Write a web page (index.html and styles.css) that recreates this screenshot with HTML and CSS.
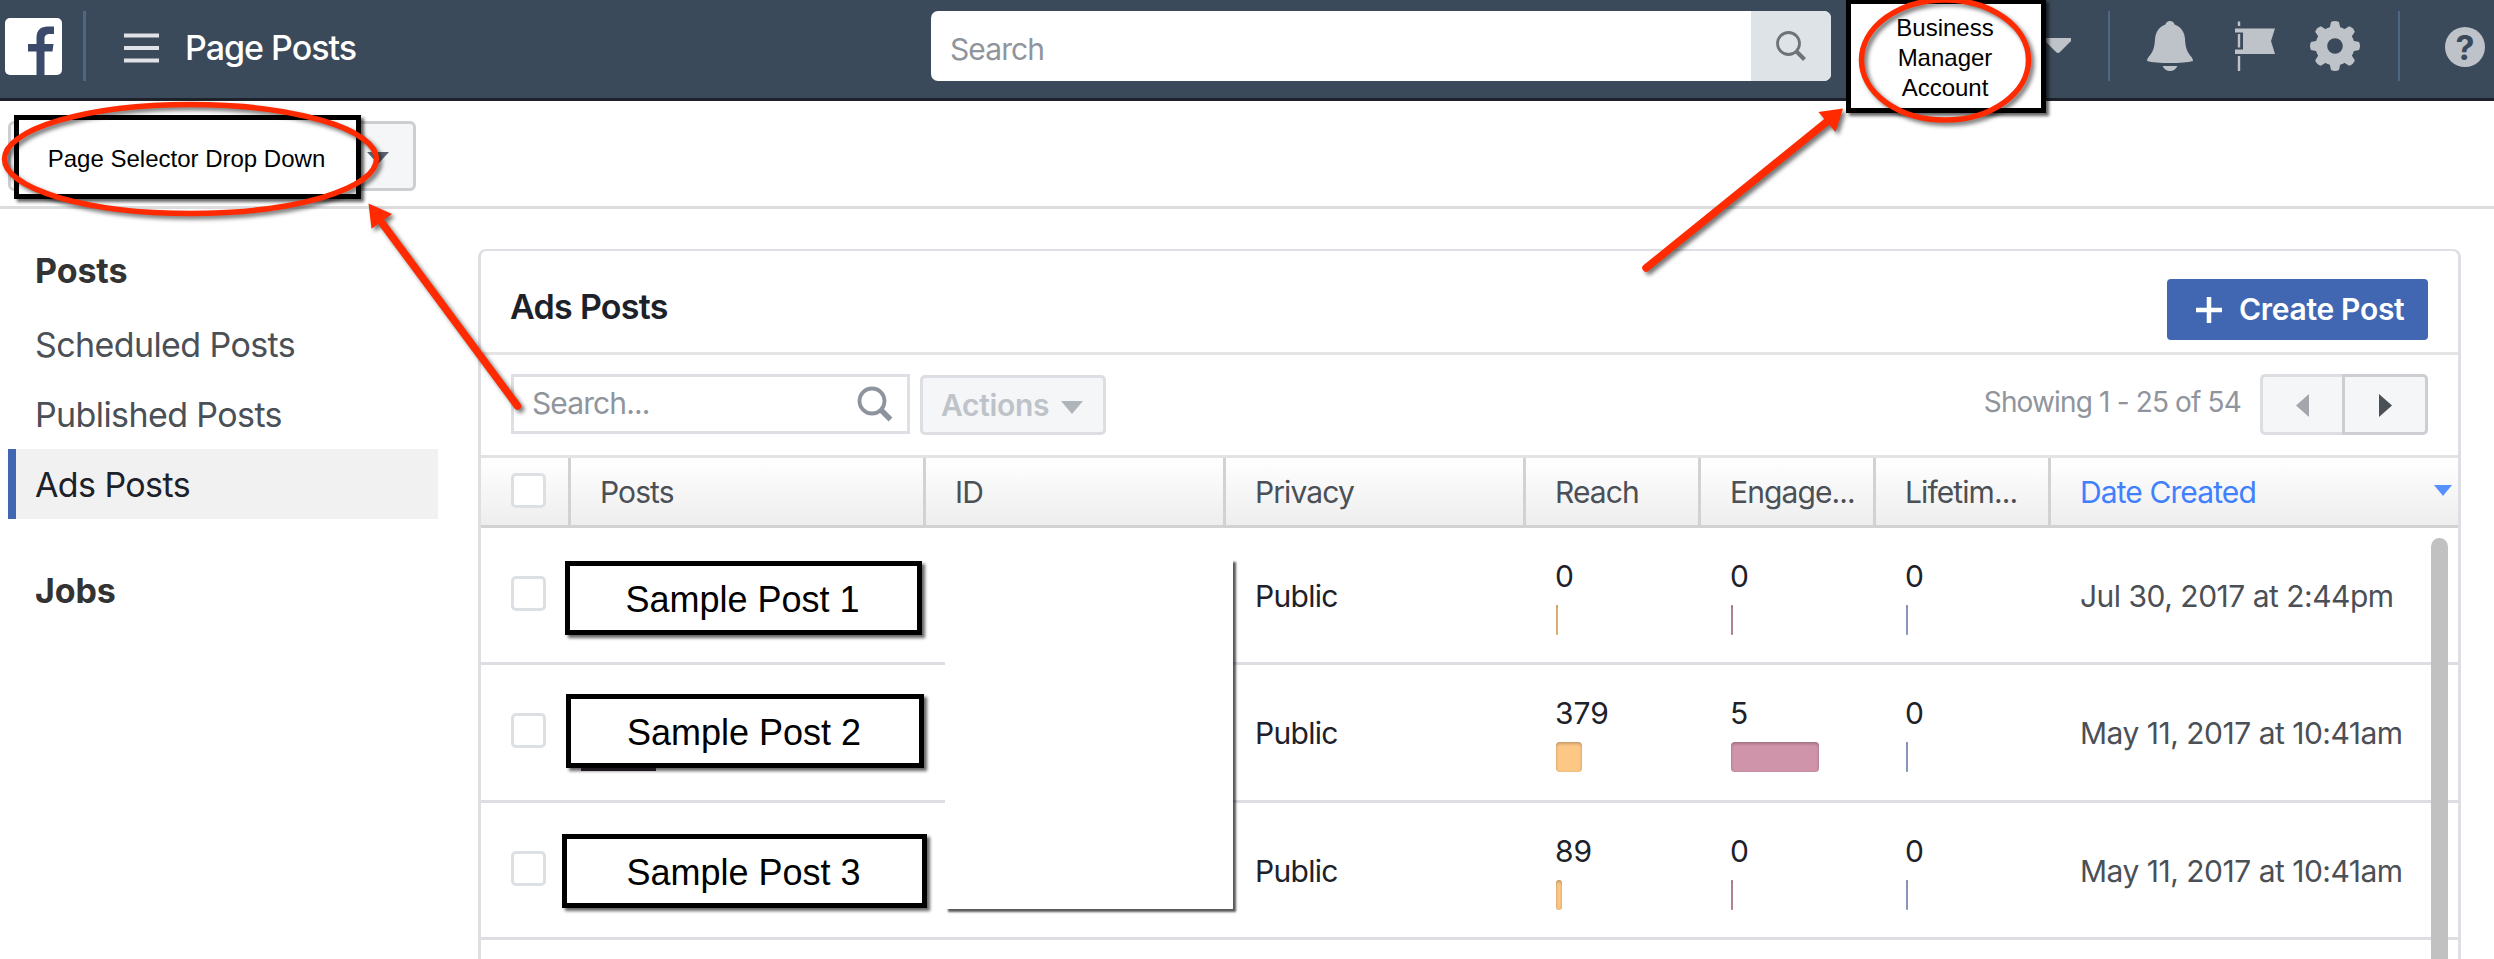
FILE: index.html
```html
<!DOCTYPE html>
<html lang="en">
  <head>
    <meta charset="UTF-8" />
    <title>Page Posts</title>
    <link rel="stylesheet" href="styles.css">
  </head>
  <body>
    <header class="topbar">
      <svg class="logo" width="57" height="57" viewBox="0 0 57 57">
        <rect width="57" height="57" rx="5" fill="#fff" />
        <path d="M31.500 57V33.500H23V26H31.500V20C31.500 12 36 8.500 42.500 8.500H49V16H45C41 16 39.500 17.500 39.500 21V26H48.500L47.500 33.500H39.500V57Z" fill="#3b4a6b" />
      </svg>
      <span class="divider divider-left"></span>
      <svg class="menu" width="35" height="30" viewBox="0 0 35 30">
        <path d="M0 2.500H35M0 15H35M0 27.500H35" stroke="#dfe2e6" stroke-width="4" />
      </svg>
      <div class="topbar-title">Page Posts</div>
      <div class="global-search">
        <div class="global-search-text">Search</div>
        <div class="global-search-button">
          <svg width="30" height="30" viewBox="0 0 30 30" fill="none" stroke="#6f7277">
            <circle cx="12.500" cy="12.500" r="11" stroke-width="2.800" />
            <path d="M20.500 20.500L28.500 28.500" stroke-width="4" />
          </svg>
        </div>
      </div>
      <svg class="account-caret" width="26" height="15" viewBox="0 0 26 15">
        <path d="M0 0H26V3L15 14Q13 16 11 14L0 3Z" fill="#bec3c9" />
      </svg>
      <span class="divider divider-account"></span>
      <svg class="icon-bell" width="46" height="50" viewBox="0 0 46 50" fill="#bec3c9">
        <path d="M23 0C20.500 0 19 1.500 18.500 3.500C12 6 8.500 11 8 18C7.500 27 6 31 1.500 36Q0 38 0 40Q8 42 23 42Q38 42 46 40Q46 38 44.500 36C40 31 38.500 27 38 18C37.500 11 34 6 27.500 3.500C27 1.500 25.500 0 23 0Z" />
        <path d="M15.500 45H30.500Q28 50 23 50Q18 50 15.500 45Z" />
      </svg>
      <svg class="icon-flag" width="40" height="50" viewBox="0 0 40 50" fill="#bec3c9">
        <path d="M0 7.500H40L36 20L40 33H0V28.500H8V11.500H0Z" />
        <path d="M2.800 0.500H5.200V5H2.800ZM2.800 13H5.200V26.500H2.800ZM2.800 35H5.200V50H2.800Z" />
      </svg>
      <svg class="icon-gear" width="50" height="50" viewBox="-25 -25 50 50" fill="#bec3c9">
        <path d="M-5.500 -17L-4 -24Q0 -26 4 -24L5.500 -17V17L4 24Q0 26 -4 24L-5.500 17Z" />
        <path transform="rotate(45)" d="M-5.500 -17L-4 -24Q0 -26 4 -24L5.500 -17V17L4 24Q0 26 -4 24L-5.500 17Z" />
        <path transform="rotate(90)" d="M-5.500 -17L-4 -24Q0 -26 4 -24L5.500 -17V17L4 24Q0 26 -4 24L-5.500 17Z" />
        <path transform="rotate(135)" d="M-5.500 -17L-4 -24Q0 -26 4 -24L5.500 -17V17L4 24Q0 26 -4 24L-5.500 17Z" />
        <circle r="19.500" />
        <circle r="7.800" fill="#3b4a5a" />
      </svg>
      <span class="divider divider-help"></span>
      <div class="icon-help">?</div>
    </header>

    <div class="page-bar">
      <div class="page-select">
        <svg width="22" height="12" viewBox="0 0 22 12"><path d="M0 0H22L11 12Z" fill="#5b6470" /></svg>
      </div>
    </div>

    <div class="content">
      <nav class="sidebar">
        <div class="nav-heading">Posts</div>
        <div class="nav-item nav-first">Scheduled Posts</div>
        <div class="nav-item">Published Posts</div>
        <div class="nav-item nav-active">Ads Posts</div>
        <div class="nav-heading nav-jobs">Jobs</div>
      </nav>

      <main class="panel">
        <div class="panel-head">
          <div class="panel-title">Ads Posts</div>
          <div class="create-button">
            <svg width="28" height="28" viewBox="0 0 28 28"><path d="M14 1V27M1 14H27" stroke="#fff" stroke-width="4.500" /></svg>
            <span>Create Post</span>
          </div>
        </div>

        <div class="toolbar">
          <div class="post-search">
            <span>Search...</span>
            <svg width="36" height="36" viewBox="0 0 36 36" fill="none" stroke="#8d949e">
              <circle cx="15" cy="15" r="12.500" stroke-width="3.800" />
              <path d="M24 24L33.500 33.500" stroke-width="5.500" />
            </svg>
          </div>
          <div class="actions-button">
            <span>Actions</span>
            <svg width="22" height="13" viewBox="0 0 22 13"><path d="M0 0H22L11 13Z" fill="#b0b5bb" /></svg>
          </div>
          <div class="showing">Showing 1 - 25 of 54</div>
          <div class="pager pager-prev">
            <svg width="13" height="23" viewBox="0 0 13 23"><path d="M13 0V23L0 11.500Z" fill="#a3a6aa" /></svg>
          </div>
          <div class="pager pager-next">
            <svg width="13" height="23" viewBox="0 0 13 23"><path d="M0 0V23L13 11.500Z" fill="#4b4f56" /></svg>
          </div>
        </div>

        <div class="grid-row grid-head">
          <div class="check-cell"><span class="checkbox"></span></div>
          <div class="head-cell">Posts</div>
          <div class="head-cell">ID</div>
          <div class="head-cell">Privacy</div>
          <div class="head-cell">Reach</div>
          <div class="head-cell">Engage...</div>
          <div class="head-cell">Lifetim...</div>
          <div class="head-cell sorted">
            <span>Date Created</span>
            <svg width="18" height="11" viewBox="0 0 18 11"><path d="M0 0H18L9 11Z" fill="#5890ff" /></svg>
          </div>
        </div>

        <div class="grid-body">
          <div class="grid-row post-row">
            <div class="check-cell"><span class="checkbox"></span></div>
            <div></div>
            <div></div>
            <div class="text-cell">Public</div>
            <div class="stat-cell">0<span class="bar reach" style="width: 2px"></span></div>
            <div class="stat-cell">0<span class="bar engagement" style="width: 2px"></span></div>
            <div class="stat-cell">0<span class="bar lifetime" style="width: 2px"></span></div>
            <div class="text-cell date">Jul 30, 2017 at 2:44pm</div>
          </div>
          <div class="grid-row post-row">
            <div class="check-cell"><span class="checkbox"></span></div>
            <div></div>
            <div></div>
            <div class="text-cell">Public</div>
            <div class="stat-cell">379<span class="bar reach" style="width: 26px"></span></div>
            <div class="stat-cell">5<span class="bar engagement" style="width: 88px"></span></div>
            <div class="stat-cell">0<span class="bar lifetime" style="width: 2px"></span></div>
            <div class="text-cell date">May 11, 2017 at 10:41am</div>
          </div>
          <div class="grid-row post-row">
            <div class="check-cell"><span class="checkbox"></span></div>
            <div></div>
            <div></div>
            <div class="text-cell">Public</div>
            <div class="stat-cell">89<span class="bar reach" style="width: 6px"></span></div>
            <div class="stat-cell">0<span class="bar engagement" style="width: 2px"></span></div>
            <div class="stat-cell">0<span class="bar lifetime" style="width: 2px"></span></div>
            <div class="text-cell date">May 11, 2017 at 10:41am</div>
          </div>
          <div class="scroll-thumb"></div>
        </div>
      </main>
    </div>

    <!-- callouts drawn over the page -->
    <div class="cover"></div>
    <div class="callout callout-page">Page Selector Drop Down</div>
    <div class="callout callout-account">Business<br />Manager<br />Account</div>
    <div class="callout sample sample-1">Sample Post 1</div>
    <div class="callout sample sample-2">Sample Post 2</div>
    <div class="thumb-edge"></div>
    <div class="callout sample sample-3">Sample Post 3</div>
    <svg class="marks" width="2494" height="959" viewBox="0 0 2494 959" fill="none" stroke="#ff2a00">
      <ellipse cx="190.500" cy="159" rx="186" ry="54.500" stroke-width="5.500" />
      <ellipse cx="1945" cy="60" rx="83.500" ry="60" stroke-width="5.500" />
      <path d="M382 223L517.500 406" stroke-width="7.500" stroke-linecap="round" />
      <path d="M368.500 203.500L392 214L371.500 228.700Z" fill="#ff2a00" stroke="none" />
      <path d="M1829 120L1646 268" stroke-width="7.500" stroke-linecap="round" />
      <path d="M1843 108.500L1818.400 112L1835.500 132Z" fill="#ff2a00" stroke="none" />
    </svg>
  </body>
</html>
```

FILE: styles.css
```css
* {
  box-sizing: border-box;
}
body {
  margin: 0;
  height: 959px;
  overflow: hidden;
  position: relative;
  background: #fff;
  color: #1d2129;
  font-family: Inter, "Liberation Sans", sans-serif;
  font-size: 30px;
}
svg {
  display: block;
  flex: none;
}

/* top bar */
.topbar {
  display: flex;
  align-items: flex-start;
  height: 101px;
  padding: 11px 0 0 5px;
  background: #3b4a5a;
  border-bottom: 3px solid #1d2129;
}
.topbar > * {
  flex: none;
}
.logo {
  margin-top: 7px;
}
.divider {
  width: 2px;
  height: 70px;
  background: #4e6785;
}
.divider-left {
  width: 3px;
  margin-left: 21px;
}
.menu {
  margin: 22px 0 0 38px;
}
.topbar-title {
  width: 746px;
  margin-left: 26px;
  color: #fff;
  font-size: 34px;
  font-weight: 500;
  line-height: 73px;
  letter-spacing: -1px;
}
.global-search {
  display: flex;
  width: 900px;
  height: 70px;
  border-radius: 7px;
  background: #fff;
  overflow: hidden;
}
.global-search-text {
  flex: 1;
  padding-left: 19px;
  color: #90949c;
  line-height: 76px;
  letter-spacing: -0.9px;
}
.global-search-button {
  width: 80px;
  padding: 20px 0 0 25px;
  background: #dee3e8;
}
.account-caret {
  margin: 27px 0 0 214px;
}
.divider-account {
  margin-left: 37px;
}
.icon-bell {
  margin: 10px 0 0 37px;
}
.icon-flag {
  margin: 10px 0 0 42px;
}
.icon-gear {
  margin: 10px 0 0 35px;
}
.divider-help {
  margin-left: 38px;
}
.icon-help {
  width: 40px;
  height: 40px;
  margin: 16px 0 0 45px;
  border-radius: 50%;
  background: #bec3c9;
  color: #3b4a5a;
  font-size: 34px;
  font-weight: 700;
  line-height: 41px;
  text-align: center;
}

/* page selector bar */
.page-bar {
  height: 108px;
  padding: 20px 0 0 8px;
  border-bottom: 3px solid #dcdddf;
}
.page-select {
  display: flex;
  justify-content: flex-end;
  width: 408px;
  height: 70px;
  padding: 28px 24px 0 0;
  border: 3px solid #ccced2;
  border-radius: 6px;
  background: #f5f6f8;
}

.content {
  display: flex;
}

/* left navigation */
.sidebar {
  width: 430px;
  margin: 26px 40px 0 8px;
  font-size: 34px;
  line-height: 71px;
  letter-spacing: -0.6px;
}
.nav-heading {
  height: 70px;
  padding-left: 27px;
  color: #333;
  font-weight: 700;
  letter-spacing: -0.1px;
}
.nav-item {
  height: 70px;
  padding-left: 27px;
  color: #4b4f56;
}
.nav-first {
  margin-top: 4px;
}
.nav-active {
  padding-left: 19px;
  border-left: 8px solid #4267b2;
  background: #f1f1f2;
  color: #1d2129;
}
.nav-jobs {
  margin-top: 36px;
}

/* posts panel */
.panel {
  width: 1983px;
  height: 720px;
  margin-top: 40px;
  border: 3px solid #dddfe4;
  border-top-width: 2px;
  border-radius: 8px;
}
.panel-head {
  display: flex;
  justify-content: space-between;
  height: 104px;
  padding: 28px 30px 0 29px;
  border-bottom: 3px solid #e5e5e6;
}
.panel-title {
  font-size: 34px;
  font-weight: 600;
  line-height: 55px;
  letter-spacing: -0.7px;
}
.create-button {
  display: flex;
  width: 261px;
  height: 61px;
  padding: 17px 0 0 28px;
  border-radius: 4px;
  background: #4267b2;
  color: #fff;
  font-weight: 600;
}
.create-button span {
  margin: -17px 0 0 16px;
  line-height: 61px;
  letter-spacing: -0.3px;
  white-space: nowrap;
}
.toolbar {
  display: flex;
  align-items: flex-start;
  height: 103px;
  padding: 19px 30px 0;
  border-bottom: 3px solid #e3e3e4;
}
.post-search {
  display: flex;
  justify-content: space-between;
  width: 399px;
  height: 60px;
  padding: 0 14px 0 18px;
  border: 3px solid #dddfe4;
  color: #90949c;
  line-height: 53px;
  letter-spacing: -0.9px;
}
.post-search svg {
  margin-top: 9px;
}
.actions-button {
  display: flex;
  width: 186px;
  height: 60px;
  margin: 1px 0 0 10px;
  padding-left: 18px;
  border: 3px solid #dcdee3;
  border-radius: 5px;
  background: #f5f6f8;
  color: #bec3c9;
  font-weight: 600;
  line-height: 54px;
  letter-spacing: -0.3px;
}
.actions-button span {
  width: 120px;
}
.actions-button svg {
  margin-top: 23px;
}
.showing {
  margin-left: auto;
  margin-right: 19px;
  color: #90949c;
  font-size: 28px;
  line-height: 57px;
  letter-spacing: -0.85px;
}
.pager {
  height: 61px;
  padding-top: 17px;
  border: 3px solid #ccced2;
  background: #f5f6f8;
}
.pager-prev {
  width: 82px;
  padding-left: 33px;
  border-color: #dcdee3;
  border-right: none;
  border-radius: 5px 0 0 5px;
}
.pager-next {
  width: 86px;
  padding-left: 34px;
  border-radius: 0 5px 5px 0;
}

/* posts grid */
.grid-row {
  display: grid;
  grid-template-columns: 90px 355px 300px 300px 175px 175px 175px 1fr;
}
.grid-head {
  height: 70px;
  border-bottom: 3px solid #d2d2d3;
  background: linear-gradient(#fff, #eeeeef);
}
.head-cell {
  padding-left: 29px;
  color: #4b4f56;
  line-height: 68px;
  letter-spacing: -0.9px;
}
.grid-head > :not(.sorted) {
  border-right: 3px solid #d2d2d3;
}
.sorted {
  display: flex;
  justify-content: space-between;
  padding-right: 6px;
  color: #4080ff;
}
.sorted svg {
  margin-top: 27px;
}
.check-cell {
  padding: 15px 0 0 30px;
}
.checkbox {
  display: block;
  width: 35px;
  height: 35px;
  border: 3px solid #dce0e4;
  border-radius: 5px;
  background: #fff;
}
.grid-body {
  position: relative;
}
.post-row {
  height: 137.25px;
  border-bottom: 3px solid #dddee3;
}
.post-row .check-cell {
  padding-top: 48px;
}
.text-cell {
  padding-left: 29px;
  line-height: 136px;
  letter-spacing: -0.7px;
  white-space: nowrap;
}
.date {
  color: #4b4f56;
  letter-spacing: -0.5px;
}
.stat-cell {
  padding: 28px 0 0 29px;
  line-height: 40px;
}
.bar {
  display: block;
  height: 30px;
  margin: 9px 0 0 1px;
  border-radius: 4px;
  box-shadow: inset 0 2px 3px rgba(0, 0, 0, 0.2), inset 0 0 2px rgba(0, 0, 0, 0.12);
}
.reach {
  background: #fdc885;
}
.engagement {
  background: #cf93aa;
}
.lifetime {
  background: #9cafd6;
}
.scroll-thumb {
  position: absolute;
  top: 10px;
  right: 10px;
  width: 17px;
  height: 440px;
  border-radius: 9px;
  background: #c1c1c1;
}

/* callouts */
.cover {
  position: absolute;
  left: 945px;
  top: 559px;
  width: 288px;
  height: 350px;
  background: #fff;
  box-shadow: 3px 3px 2px rgba(0, 0, 0, 0.65);
  clip-path: inset(0 -6px -6px 0);
}
.callout {
  position: absolute;
  padding-right: 2px;
  border: 5px solid #000;
  background: #fff;
  box-shadow: 3px 3px 3px rgba(0, 0, 0, 0.6);
  color: #000;
  font-family: "Liberation Sans", Arial, sans-serif;
  font-size: 24px;
  text-align: center;
  white-space: nowrap;
}
.callout-page {
  left: 14px;
  top: 115px;
  width: 347px;
  height: 84px;
  line-height: 78px;
}
.callout-account {
  left: 1846px;
  top: -1px;
  width: 200px;
  height: 114px;
  padding-top: 9px;
  line-height: 30px;
}
.sample {
  height: 74px;
  font-size: 36px;
  line-height: 67px;
}
.sample-1 {
  left: 565px;
  top: 561px;
  width: 357px;
}
.sample-2 {
  left: 566px;
  top: 694px;
  width: 358px;
}
.sample-3 {
  left: 562px;
  top: 834px;
  width: 365px;
}
.thumb-edge {
  position: absolute;
  left: 581px;
  top: 768px;
  width: 75px;
  height: 3px;
  background: #1f171f;
}
.marks {
  position: absolute;
  left: 0;
  top: 0;
  filter: drop-shadow(3px 3px 2px rgba(0, 0, 0, 0.55));
}
```
